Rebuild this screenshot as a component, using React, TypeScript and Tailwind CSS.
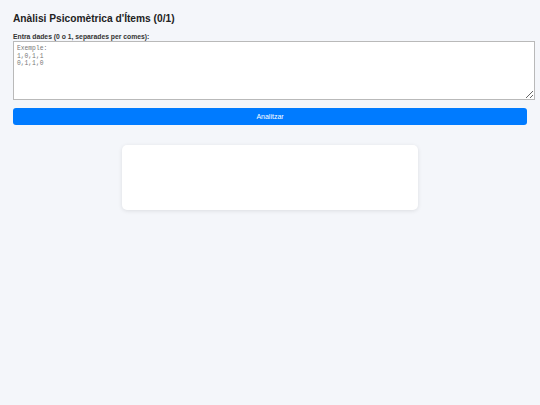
export default function App() {
  return (
    <div className="min-h-[405px] bg-[#f4f6fa] px-[13px] pt-[12px] font-['Liberation_Sans',Arial,sans-serif] text-[#222]">
      <h1 className="text-[10.2px] font-bold leading-[14px] mb-[7px]">
        Anàlisi Psicomètrica d'Ítems (0/1)
      </h1>
      <label className="block text-[6.8px] font-bold leading-[8px] text-[#333]">
        Entra dades (0 o 1, separades per comes):
      </label>
      <textarea
        className="box-content block w-full h-[51px] px-[3px] py-[3px] border border-[#b9b9b9] bg-white text-[6.3px] leading-[7.5px] font-['Liberation_Mono',monospace] placeholder:text-[#777] outline-none"
        placeholder={"Exemple:\n1,0,1,1\n0,1,1,0"}
      />
      <button className="mt-[8px] w-full h-[17px] rounded-[3px] bg-[#007bff] text-white text-[7px] leading-[17px]">
        Analitzar
      </button>
      <div className="mx-auto mt-[19px] w-[296px] h-[65px] bg-white rounded-[5px] shadow-[0_1px_4px_rgba(0,0,0,0.1)]"></div>
    </div>
  );
}
